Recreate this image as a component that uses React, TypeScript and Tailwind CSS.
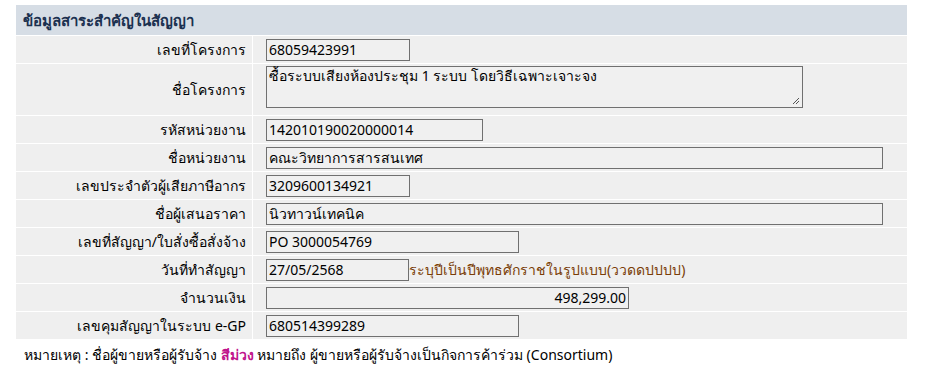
import React from 'react';

type Field = {
  label: string;
  value: string;
  width: string;
  align?: 'left' | 'right';
  note?: string;
};

const fields: Field[] = [
  { label: 'รหัสหน่วยงาน', value: '142010190020000014', width: 'w-[217px]' },
  { label: 'ชื่อหน่วยงาน', value: 'คณะวิทยาการสารสนเทศ', width: 'w-[617px]' },
  { label: 'เลขประจำตัวผู้เสียภาษีอากร', value: '3209600134921', width: 'w-[144px]' },
  { label: 'ชื่อผู้เสนอราคา', value: 'นิวทาวน์เทคนิค', width: 'w-[617px]' },
  { label: 'เลขที่สัญญา/ใบสั่งซื้อสั่งจ้าง', value: 'PO 3000054769', width: 'w-[253px]' },
  {
    label: 'วันที่ทำสัญญา',
    value: '27/05/2568',
    width: 'w-[143px]',
    note: 'ระบุปีเป็นปีพุทธศักราชในรูปแบบ(ววดดปปปป)',
  },
  { label: 'จำนวนเงิน', value: '498,299.00', width: 'w-[363px]', align: 'right' },
  { label: 'เลขคุมสัญญาในระบบ e-GP', value: '680514399289', width: 'w-[253px]' },
];

const font = { fontFamily: 'Tahoma, "Noto Sans", "DejaVu Sans", sans-serif' };

const Box = ({ value, width, align }: { value: string; width: string; align?: 'left' | 'right' }) => (
  <div
    className={`${width} h-[22px] border border-[#707070] bg-[#f0f0f0] px-[2px] leading-[20px] text-black whitespace-nowrap overflow-hidden ${
      align === 'right' ? 'text-right' : ''
    }`}
  >
    {value}
  </div>
);

const Label = ({ children, tall }: { children: React.ReactNode; tall?: boolean }) => (
  <div className={`bg-[#efefef] flex items-center justify-end pr-[6px] whitespace-nowrap ${tall ? 'h-[51px]' : 'h-[27px]'}`}>
    {children}
  </div>
);

export default function App() {
  return (
    <div className="bg-white w-[937px] h-[372px] pt-[5px] text-[14px] text-black" style={font}>
      <div className="ml-[16px] w-[891px] flex flex-col gap-px">
        <div className="h-[30px] bg-[#d6dde5] flex items-center pl-[7px] text-[15px] font-bold text-[#1c3150]">
          ข้อมูลสาระสำคัญในสัญญา
        </div>

        <div className="grid grid-cols-[236px_1fr] gap-px">
          <Label>เลขที่โครงการ</Label>
          <div className="bg-[#efefef] h-[27px] flex items-center pl-[13px]">
            <Box value="68059423991" width="w-[144px]" />
          </div>

          <Label tall>ชื่อโครงการ</Label>
          <div className="bg-[#efefef] h-[51px] pl-[13px] pt-[2px]">
            <div className="relative w-[537px] h-[42px] border border-[#707070] bg-[#f0f0f0] px-[2px] leading-[18px]">
              ซื้อระบบเสียงห้องประชุม 1 ระบบ โดยวิธีเฉพาะเจาะจง
              <svg className="absolute right-[2px] bottom-[2px]" width="9" height="9" viewBox="0 0 9 9">
                <path d="M8 2 L2 8 M8 5 L5 8" stroke="#555" strokeWidth="1" fill="none" />
              </svg>
            </div>
          </div>

          {fields.map((f) => (
            <React.Fragment key={f.label}>
              <Label>{f.label}</Label>
              <div className="bg-[#efefef] h-[27px] flex items-center pl-[13px]">
                <Box value={f.value} width={f.width} align={f.align} />
                {f.note && <span className="text-[#7a3d06] whitespace-nowrap">{f.note}</span>}
              </div>
            </React.Fragment>
          ))}
        </div>
      </div>

      <p className="ml-[24px] mt-[7px] leading-[18px]">
        หมายเหตุ : ชื่อผู้ขายหรือผู้รับจ้าง <span className="font-bold text-[#c0148c]">สีม่วง</span> หมายถึง
        ผู้ขายหรือผู้รับจ้างเป็นกิจการค้าร่วม (Consortium)
      </p>
    </div>
  );
}
